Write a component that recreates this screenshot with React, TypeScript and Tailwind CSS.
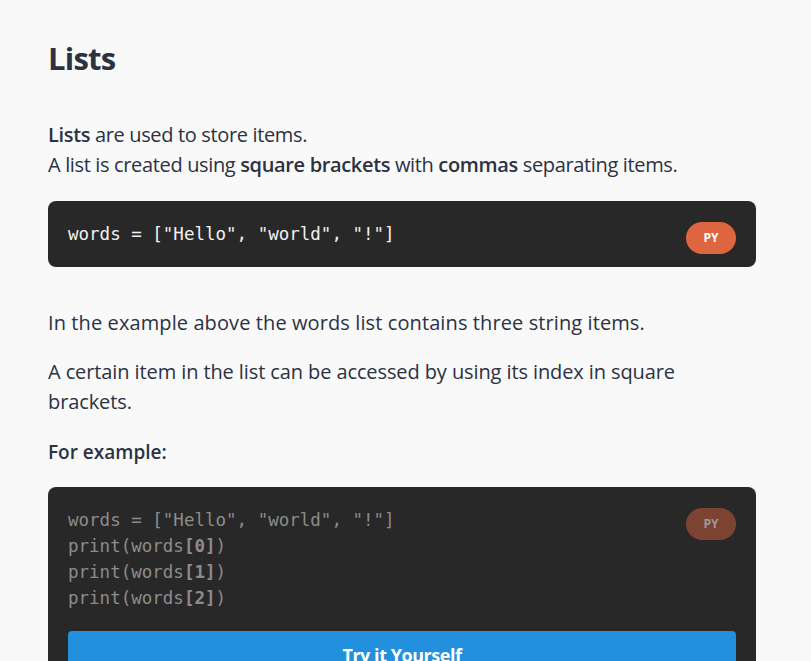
import { ReactNode } from "react";

function CodeBlock({ children, dim, action }: { children: ReactNode; dim?: boolean; action?: ReactNode }) {
  return (
    <div className="rounded-lg bg-[#282828] px-5 pt-5 pb-5 relative">
      <span
        className={
          "absolute right-5 top-[21px] w-[50px] h-8 rounded-full flex items-center justify-center text-[12px] font-bold " +
          (dim ? "bg-[#7c4333] text-[#a09a98]" : "bg-[#dd6641] text-white")
        }
      >
        PY
      </span>
      <pre
        className={
          "font-['DejaVu_Sans_Mono',monospace] text-[17.5px] leading-[26px] " +
          (dim ? "text-[#8c8c8c]" : "text-[#f1f1f1]")
        }
      >
        {children}
      </pre>
      {action}
    </div>
  );
}

export default function App() {
  return (
    <div className="min-h-screen bg-[#f9f9f9] text-[#2b3242] font-['Open_Sans',sans-serif]">
      <div className="max-w-[708px] ml-12 pt-[36px]">
        <h1 className="text-[31px] font-bold tracking-tight leading-[44px]">Lists</h1>

        <p className="mt-[40px] text-[20px] leading-[30px] tracking-[-0.35px]">
          <b className="font-semibold">Lists</b> are used to store items.
          <br />A list is created using <b className="font-semibold">square brackets</b> with{" "}
          <b className="font-semibold">commas</b> separating items.
        </p>

        <div className="mt-[21px]">
          <CodeBlock>words = ["Hello", "world", "!"]</CodeBlock>
        </div>

        <p className="mt-[41px] text-[20px] leading-[30px] tracking-[0.1px]">In the example above the words list contains three string items.</p>
        <p className="mt-[19px] text-[20px] leading-[30px] tracking-[-0.1px]">
          A certain item in the list can be accessed by using its index in square brackets.
        </p>
        <p className="mt-[20px] text-[19px] leading-[30px] font-semibold">For example:</p>

        <div className="mt-[20px]">
          <CodeBlock
            dim
            action={
              <button className="mt-5 w-full h-12 rounded bg-[#2290dd] text-white font-bold text-[18px] tracking-tight">
                Try it Yourself
              </button>
            }
          >
            {'words = ["Hello", "world", "!"]\n'}
            print(words<b>[0]</b>){"\n"}
            print(words<b>[1]</b>){"\n"}
            print(words<b>[2]</b>)
          </CodeBlock>
        </div>
      </div>
    </div>
  );
}
